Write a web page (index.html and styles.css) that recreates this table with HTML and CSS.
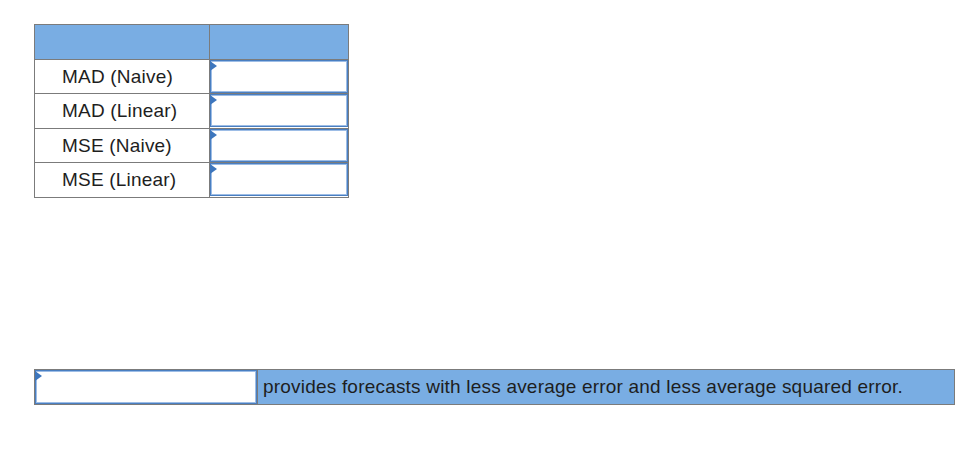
FILE: index.html
```html
<!DOCTYPE html>
<html>
<head>
<meta charset="utf-8">
<link rel="stylesheet" href="styles.css">
</head>
<body>
<div class="page">
  <table class="grid">
    <tr class="head"><th class="c1"></th><th class="c2"></th></tr>
    <tr class="r-a"><td class="c1">MAD (Naive)</td><td class="c2 field"><input class="box" type="text"><span class="flag"></span></td></tr>
    <tr class="r-b"><td class="c1">MAD (Linear)</td><td class="c2 field"><input class="box" type="text"><span class="flag"></span></td></tr>
    <tr class="r-a"><td class="c1">MSE (Naive)</td><td class="c2 field"><input class="box" type="text"><span class="flag"></span></td></tr>
    <tr class="r-b"><td class="c1">MSE (Linear)</td><td class="c2 field"><input class="box" type="text"><span class="flag"></span></td></tr>
  </table>

  <div class="answer">
    <div class="answer-field"><input class="box" type="text"><span class="flag"></span></div>
    <div class="answer-text">provides forecasts with less average error and less average squared error.</div>
  </div>
</div>
</body>
</html>
```

FILE: styles.css
```css
html, body {
  margin: 0;
  padding: 0;
  background: #ffffff;
}

.page {
  padding: 24px 0 0 34px;
  font-family: "Liberation Sans", Arial, sans-serif;
  font-size: 19px;
  letter-spacing: 0.2px;
  color: #1e1e1e;
}

.grid {
  border-collapse: separate;
  border-spacing: 0;
  border-left: 1px solid #7b7b7b;
  border-top: 1px solid #7b7b7b;
  table-layout: fixed;
  width: 315px;
}

.grid th,
.grid td {
  box-sizing: border-box;
  border-right: 1px solid #7b7b7b;
  border-bottom: 1px solid #7b7b7b;
  padding: 0;
}

.grid .c1 {
  width: 175px;
  padding-left: 27px;
  text-align: left;
  font-weight: normal;
}

.grid .c2 {
  width: 139px;
}

.head th {
  background: #79ade3;
  height: 35px;
}

.r-a td { height: 34px; }
.r-b td { height: 35px; }

.field {
  position: relative;
  vertical-align: top;
}

.box {
  display: block;
  box-sizing: border-box;
  width: 100%;
  height: 100%;
  margin: 0;
  padding: 0;
  border: 1px solid #4a7fc1;
  box-shadow: inset 0 0 0 1px #9dbde6;
  background: #ffffff;
  outline: none;
  -webkit-appearance: none;
  appearance: none;
  border-radius: 0;
}

.grid .box {
  position: absolute;
  left: 0;
  top: 0;
  width: 138px;
  height: 33px;
}

.flag {
  position: absolute;
  left: 0;
  top: 1px;
  width: 0;
  height: 0;
  border-top: 5px solid transparent;
  border-bottom: 5px solid transparent;
  border-left: 7px solid #3d76bd;
}

.answer {
  display: flex;
  margin-top: 171px;
  width: 921px;
  box-sizing: border-box;
  border: 1px solid #7b7b7b;
  height: 36px;
}

.answer-field {
  position: relative;
  width: 222px;
  flex: none;
  border-right: 1px solid #7b7b7b;
}

.answer-text {
  flex: 1;
  background: #79ade3;
  display: flex;
  align-items: center;
  padding-left: 5px;
  white-space: nowrap;
}
```
